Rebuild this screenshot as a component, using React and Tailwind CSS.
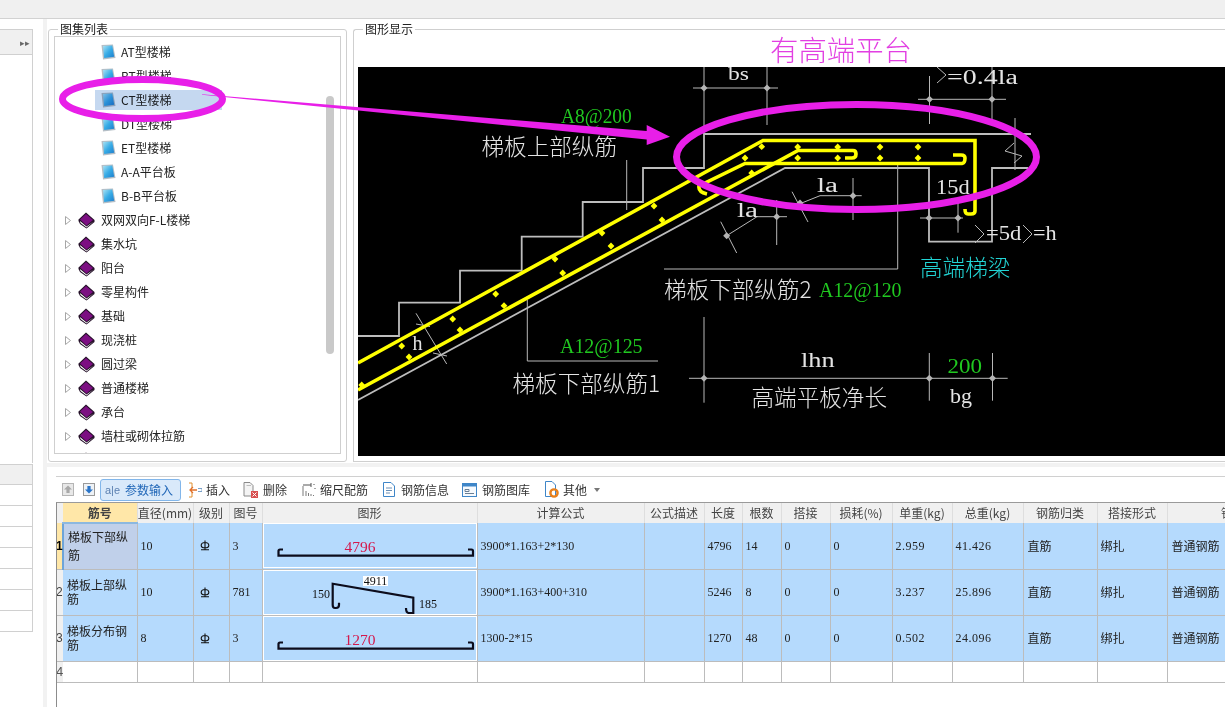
const cjk = "font-['Noto_Sans_CJK_SC',sans-serif]"

const childItems = ["AT型楼梯", "BT型楼梯", "CT型楼梯", "DT型楼梯", "ET型楼梯", "A-A平台板", "B-B平台板"]
const parentItems = ["双网双向F-L楼梯", "集水坑", "阳台", "零星构件", "基础", "现浇桩", "圆过梁", "普通楼梯", "承台", "墙柱或砌体拉筋", ""]

const columns = [
  { name: "筋号", w: 74 },
  { name: "直径(mm)", w: 56 },
  { name: "级别", w: 36 },
  { name: "图号", w: 33 },
  { name: "图形", w: 215 },
  { name: "计算公式", w: 167 },
  { name: "公式描述", w: 60 },
  { name: "长度", w: 38 },
  { name: "根数", w: 39 },
  { name: "搭接", w: 49 },
  { name: "损耗(%)", w: 62 },
  { name: "单重(kg)", w: 60 },
  { name: "总重(kg)", w: 71 },
  { name: "钢筋归类", w: 74 },
  { name: "搭接形式", w: 70 },
  { name: "钢筋特征", w: 156 },
]

const rows = [
  { name: "梯板下部纵筋", d: "10", no: "3", formula: "3900*1.163+2*130", len: "4796", count: "14", unit: "2.959", total: "41.426", shape: "bar", label: "4796" },
  { name: "梯板上部纵筋", d: "10", no: "781", formula: "3900*1.163+400+310", len: "5246", count: "8", unit: "3.237", total: "25.896", shape: "bent" },
  { name: "梯板分布钢筋", d: "8", no: "3", formula: "1300-2*15", len: "1270", count: "48", unit: "0.502", total: "24.096", shape: "bar", label: "1270" },
]

function DocIcon() {
  return (
    <svg width="15" height="16" viewBox="0 0 15 16" className="shrink-0">
      <defs>
        <linearGradient id="docfill" x1="0" y1="0" x2="1" y2="1">
          <stop offset="0" stopColor="#a8e2f4" />
          <stop offset="0.5" stopColor="#38ace6" />
          <stop offset="1" stopColor="#1c7ccc" />
        </linearGradient>
      </defs>
      <path d="M0.5 1 L12 0.5 L14.5 14 L2 15.5 Z" fill="#b4bec6" />
      <path d="M2 2 L11.2 1.6 L13.2 12.8 L3.2 14 Z" fill="url(#docfill)" />
    </svg>
  )
}

function BookIcon() {
  return (
    <svg width="17" height="17" viewBox="0 0 17 17" className="shrink-0">
      <path d="M0.5 7.5 L8 0.5 L16.5 8 L16.5 10 L8.5 16.5 L2 12 L0.5 9 Z" fill="#241028" />
      <path d="M2 7.5 L8 2 L15 8 L8.5 13.5 Z" fill="#7c0f82" />
      <path d="M2 9 L8.5 14.5 L15.5 9.5 L8.5 15.5 L2.5 11 Z" fill="#ffffff" />
    </svg>
  )
}

function Expander() {
  return (
    <svg width="6" height="9" viewBox="0 0 6 9" className="shrink-0">
      <path d="M0.5 0.5 L5.5 4.5 L0.5 8.5 Z" fill="#fff" stroke="#a6a6a6" />
    </svg>
  )
}

function TreePanel() {
  return (
    <div className="relative mt-[10px] ml-[1px] w-[299px] h-[433px] border border-[#cfcfcf] rounded-[3px] bg-white pt-[6px] pl-[5px] pr-[5px] pb-[7px]">
      <div className={`absolute -top-[8px] left-[9px] bg-white px-[2px] text-[12px] leading-[14px] text-[#222] ${cjk}`}>图集列表</div>
      <div className={`relative h-full overflow-hidden border border-[#cfcfcf] text-[12px] text-[#222] ${cjk}`}>
        <div className="pt-[3px]">
          {childItems.map((t) => (
            <div key={t} className="flex h-[24px] items-center pl-[46px]">
              <DocIcon />
              <span className="ml-[5px] leading-[20px]">{t}</span>
            </div>
          ))}
          {parentItems.map((t, i) => (
            <div key={i} className="flex h-[24px] items-center pl-[10px]">
              <Expander />
              <span className="ml-[7px] flex"><BookIcon /></span>
              <span className="ml-[6px] whitespace-nowrap">{t}</span>
            </div>
          ))}
        </div>
        <div className="absolute left-[40px] top-[53px] h-[20px] w-[127px] bg-[#c5d8f0] mix-blend-multiply" />
        <div className="absolute left-[271px] top-[59px] h-[258px] w-[8px] rounded-[4px] bg-[#c9c9c9]" />
      </div>
    </div>
  )
}

function Diamond({ x, y, r = 3.4 }) {
  return <polygon points={`${x},${y - r} ${x + r},${y} ${x},${y + r} ${x - r},${y}`} fill="#ffff00" />
}

function DimDot({ x, y }) {
  return <polygon points={`${x},${y - 3.5} ${x + 3.5},${y} ${x},${y + 3.5} ${x - 3.5},${y}`} fill="#b4b4b4" />
}

// half-width cad lettering, every character gets the same advance
function CadLabel({ x, y, size = 20, adv = 11.8, fill = "#e4e4e4", children }) {
  return (
    <text
      x={x}
      y={y}
      fontSize={size}
      fill={fill}
      textLength={children.length * adv}
      lengthAdjust="spacingAndGlyphs"
      fontFamily="'Liberation Serif','Noto Sans CJK SC',serif"
    >
      {children}
    </text>
  )
}

function CadLabelCn({ x, y, size = 22.6, fill = "#e4e4e4", children }) {
  return (
    <text x={x} y={y} fontSize={size} fill={fill} fontWeight="300" fontFamily="'Noto Sans CJK SC',sans-serif">
      {children}
    </text>
  )
}

const dots = [
  [401.7, 346], [452.7, 319], [495.7, 294], [555, 259], [602, 233], [654, 206], [745, 158], [761.7, 146.7],
  [361.7, 385], [409, 357], [460, 330], [504, 305.7], [562.7, 273], [611, 246], [662, 220], [751.7, 173],
  [797.7, 147], [837.7, 147], [880, 147], [918, 147], [797.7, 158], [837.7, 158], [880, 158], [918, 158],
]

const dimLines = [
  "M704 67V134", "M767 67V125", "M693 88H778",
  "M929.5 76V124", "M992 67V121", "M918 99.3H1006",
  "M1015 118V170", "M1014 143L1005 151L1022 156L1014 163",
  "M626.7 160V210",
  "M801.7 203L820 195.7H861.7", "M853 178V220", "M792 191.7L808 222",
  "M897.7 163V269", "M664 269H897.7",
  "M920 218H963", "M958 203V232.7",
  "M726.7 235.7L757 216.7H787", "M776.7 200V245", "M720.7 221.7L736.7 253",
  "M416 313.3L446.7 364", "M416 324L430 326.5", "M433 353L447 356",
  "M527.3 300V361H658",
  "M689 378.3H1007.7", "M704 317V402.7", "M929.3 353V400.7", "M992.5 353V400.7",
  "M975 225L984 234L975 243", "M1023 225L1032 234L1023 243",
  "M937 67L946 75L937 83",
]

function CadDrawing() {
  return (
    <svg viewBox="358 67 867 389" width="867" height="389" className="block bg-black">
      <path
        d="M358 336H399V302.7H460V270.7H521.7V236.7H582.7V202H643V168H704V134H1031"
        fill="none" stroke="#bdbdbd" strokeWidth="1.8"
      />
      <path
        d="M358 400L785 168H929V241.7H992V168H1028"
        fill="none" stroke="#bdbdbd" strokeWidth="1.8"
      />
      <path d={dimLines.join(" ")} fill="none" stroke="#b8b8b8" strokeWidth="1" />
      <g fill="none" stroke="#ffff00" strokeWidth="3.6">
        <path d="M358 363L763 140.5H975V211Q975 214 971 214H968Q965 214 965 209" />
        <path d="M358 390L798 150.5H853Q856 150.5 856 154Q856 158 852 158H845" />
        <path d="M707 194Q698 192 699 186L745 163.5H962Q965 163 965 158Q965 155 961 155H953" />
      </g>
      {dots.map(([x, y]) => <Diamond key={`${x}-${y}`} x={x} y={y} />)}
      {[[704, 88], [767, 88], [929.5, 99.3], [992, 99.3], [800, 203], [853, 195.7], [929, 218], [958, 218], [726.7, 235.7], [776.7, 216.7], [704, 378.3], [929.3, 378.3], [992.5, 378.3]].map(([x, y]) => (
        <DimDot key={`${x}-${y}`} x={x} y={y} />
      ))}
      <CadLabel x={728} y={80} size={18} adv={10.5}>bs</CadLabel>
      <CadLabel x={947} y={84}>=0.4la</CadLabel>
      <CadLabel x={561} y={122.7} fill="#20c820">A8@200</CadLabel>
      <CadLabelCn x={481.5} y={155}>梯板上部纵筋</CadLabelCn>
      <CadLabel x={817} y={192} adv={10.5}>la</CadLabel>
      <CadLabel x={737} y={217} adv={10.5}>la</CadLabel>
      <CadLabel x={936} y={194} adv={11.2}>15d</CadLabel>
      <CadLabel x={986} y={240}>=5d</CadLabel>
      <CadLabel x={1033} y={240}>=h</CadLabel>
      <CadLabel x={412.5} y={350} adv={10}>h</CadLabel>
      <CadLabelCn x={664} y={298}>梯板下部纵筋2</CadLabelCn>
      <CadLabel x={819} y={297} fill="#20c820">A12@120</CadLabel>
      <CadLabelCn x={920} y={276} fill="#22d4d4">高端梯梁</CadLabelCn>
      <CadLabel x={560} y={352.7} fill="#20c820">A12@125</CadLabel>
      <CadLabelCn x={512.5} y={392}>梯板下部纵筋1</CadLabelCn>
      <CadLabel x={801} y={367} adv={11.2}>lhn</CadLabel>
      <CadLabel x={947.5} y={373} adv={11.5} fill="#20c820">200</CadLabel>
      <CadLabelCn x={751.5} y={406}>高端平板净长</CadLabelCn>
      <CadLabel x={950} y={403} adv={11}>bg</CadLabel>
    </svg>
  )
}

function DrawingPanel() {
  return (
    <div className="relative mt-[10px] ml-[6px] h-[433px] flex-1 border border-r-0 border-[#cfcfcf] rounded-tl-[3px] bg-white pl-[4px] pt-[37px]">
      <div className={`absolute -top-[8px] left-[9px] bg-white px-[2px] text-[12px] leading-[14px] text-[#222] ${cjk}`}>图形显示</div>
      <div className={`absolute left-[416px] top-[1px] text-[28.4px] leading-[36px] font-light text-[#e23fe2] ${cjk}`}>有高端平台</div>
      <CadDrawing />
    </div>
  )
}

function ToolBtn({ icon, label, className = "" }) {
  return (
    <div className={`flex items-center ${className}`}>
      {icon}
      <span className="text-[12px] text-[#333] whitespace-nowrap">{label}</span>
    </div>
  )
}

function Toolbar() {
  return (
    <div className={`flex h-[26px] items-center border-t border-[#d0d0d0] pl-[6px] ${cjk}`}>
      <svg width="12" height="13" viewBox="0 0 12 13" className="shrink-0">
        <rect x="0.5" y="0.5" width="11" height="12" fill="#e8e8e8" stroke="#b5b5b5" />
        <path d="M6 2.5L10 6.5H7.6V10H4.4V6.5H2Z" fill="#a8a8a8" />
      </svg>
      <svg width="12" height="13" viewBox="0 0 12 13" className="ml-[9px] shrink-0">
        <rect x="0.5" y="0.5" width="11" height="12" fill="#eef2f6" stroke="#9a9a9a" />
        <path d="M6 10.5L10 6.5H7.6V3H4.4V6.5H2Z" fill="#2a74c8" />
      </svg>
      <div className="ml-[5px] flex h-[22px] w-[81px] items-center rounded-[3px] border border-[#82b6ea] bg-[#d9e9fa] pl-[4px]">
        <span className="w-[17px] text-[11px] leading-[14px] text-[#5a7fb0] font-['Liberation_Sans',sans-serif]">a|e</span>
        <span className="ml-[3px] text-[12px] text-[#2368b8] whitespace-nowrap">参数输入</span>
      </div>
      <ToolBtn
        className="ml-[7px]"
        label="插入"
        icon={
          <svg width="14" height="16" viewBox="0 0 14 16" className="mr-[4px] shrink-0">
            <path d="M1 1H4V6M4 10V15H1" fill="none" stroke="#e09030" strokeWidth="1" />
            <path d="M9 8H2M5 5L2 8L5 11" fill="none" stroke="#e0702a" strokeWidth="1.3" />
            <path d="M10 6.5H14V9.5H10" fill="none" stroke="#7aa0c8" strokeWidth="1" />
          </svg>
        }
      />
      <ToolBtn
        className="ml-[13px]"
        label="删除"
        icon={
          <svg width="15" height="16" viewBox="0 0 15 16" className="mr-[5px] shrink-0">
            <path d="M1 0.5H7L10 3.5V14H1Z" fill="#f4f4f4" stroke="#8a8a8a" />
            <path d="M3.5 3.5H8" stroke="#bcbcbc" />
            <rect x="8" y="9" width="7" height="7" fill="#d85050" />
            <path d="M9.5 10.5L13.5 14.5M13.5 10.5L9.5 14.5" stroke="#fff" />
          </svg>
        }
      />
      <ToolBtn
        className="ml-[15px]"
        label="缩尺配筋"
        icon={
          <svg width="14" height="14" viewBox="0 0 14 14" className="mr-[4px] shrink-0">
            <path d="M1 3V13M4 8V13M6.5 10V13M9 11V13M11.5 12V13" stroke="#7a7a7a" fill="none" />
            <path d="M1 2H9M9 0V4M12 1V2M13 5V6" stroke="#555" fill="none" />
          </svg>
        }
      />
      <ToolBtn
        className="ml-[14px]"
        label="钢筋信息"
        icon={
          <svg width="14" height="15" viewBox="0 0 14 15" className="mr-[5px] shrink-0">
            <path d="M1.5 0.5H9L12.5 4V14.5H1.5Z" fill="#fff" stroke="#3f86c8" />
            <path d="M4 6H10M4 8.5H10M4 11H8" stroke="#6a8fb5" />
          </svg>
        }
      />
      <ToolBtn
        className="ml-[13px]"
        label="钢筋图库"
        icon={
          <svg width="15" height="14" viewBox="0 0 15 14" className="mr-[5px] shrink-0">
            <rect x="0.5" y="0.5" width="14" height="13" fill="#f6fafe" stroke="#3f86c8" />
            <rect x="0.5" y="0.5" width="14" height="3" fill="#3f86c8" />
            <path d="M3 6.5H7V8.5H3ZM3 10.5H12" fill="none" stroke="#6a7f95" />
          </svg>
        }
      />
      <ToolBtn
        className="ml-[14px]"
        label="其他"
        icon={
          <svg width="15" height="17" viewBox="0 0 15 17" className="mr-[4px] shrink-0">
            <path d="M1.5 0.5H8L11.5 4V15.5H1.5Z" fill="#fff" stroke="#3f86c8" />
            <circle cx="10" cy="12" r="3.6" fill="none" stroke="#e8801c" strokeWidth="2.4" />
          </svg>
        }
      />
      <svg width="6" height="4" viewBox="0 0 6 4" className="ml-[7px] shrink-0">
        <path d="M0 0H6L3 4Z" fill="#777" />
      </svg>
    </div>
  )
}

function BarShape({ label }) {
  return (
    <svg width="213" height="43" viewBox="0 0 213 43" className="block">
      <text x="96" y="28" textAnchor="middle" fontSize="15.5" fill="#d4184c" fontFamily="'Liberation Serif',serif">{label}</text>
      <path d="M19 25.5H16Q14.5 25.5 14.5 27V31.7H209V27Q209 25.5 207.5 25.5H204" fill="none" stroke="#0c0c1c" strokeWidth="2.2" />
    </svg>
  )
}

function BentShape() {
  return (
    <svg width="213" height="43" viewBox="0 0 213 43" className="block">
      <rect x="99" y="5" width="25" height="10" fill="#fff" />
      <text x="111.5" y="14" textAnchor="middle" fontSize="12" fill="#111" fontFamily="'Liberation Serif',serif">4911</text>
      <text x="48" y="27" fontSize="12" fill="#111" fontFamily="'Liberation Serif',serif">150</text>
      <text x="155" y="37" fontSize="12" fill="#111" fontFamily="'Liberation Serif',serif">185</text>
      <path d="M75 31.7V34Q75 37 72 37H71Q68.7 37 68.7 34V12.7L149.3 26.7V42H145Q142 42 142 37" fill="none" stroke="#0c0c1c" strokeWidth="2.2" />
    </svg>
  )
}

// rebar grade symbol
function GradeMark() {
  return (
    <svg width="10" height="11" viewBox="0 0 10 11" className="ml-[3px] block">
      <path d="M5 0.5V9.5M1 9.8H9M1.2 5.5Q1.2 2.5 5 2.5Q8.8 2.5 8.8 5.5Q8.8 7.8 5 7.8Q1.2 7.8 1.2 5.5Z" fill="none" stroke="#111" strokeWidth="1.1" />
    </svg>
  )
}

function ParamTable() {
  const cellBorder = "border-r border-b border-[#bcbcbc]"
  const num = "font-['Liberation_Serif',serif] text-[12px]"
  return (
    <div className="relative ml-[9px] flex-1 overflow-hidden border-t border-l border-t-[#9a9a9a] border-l-[#8c8c8c]">
      <table className={`w-[1160px] table-fixed border-collapse text-[12px] text-[#222] ${cjk}`}>
        <colgroup>
          <col className="w-[6px]" />
          {columns.map((c) => <col key={c.name} style={{ width: c.w }} />)}
        </colgroup>
        <thead>
          <tr className="h-[20px]">
            <th className="bg-[#f0f0f0]" />
            {columns.map((c, i) => (
              <th
                key={c.name}
                className={`overflow-hidden whitespace-nowrap border-r border-[#dedede] p-0 text-center font-normal text-[#444] ${i === 0 ? "bg-[#ffe7a8] border-b-2 border-b-[#8cb8e0] font-semibold text-[#222]" : "bg-[#f0f0f0]"}`}
              >
                {c.name}
              </th>
            ))}
          </tr>
        </thead>
        <tbody>
          {rows.map((r, i) => (
            <tr key={r.name} className="h-[46px] bg-[#b5dafd]">
              <td className={`overflow-visible border-b border-[#bcbcbc] p-0 text-[12px] ${i === 0 ? "bg-[#ffe7a8] font-bold text-black" : "bg-[#f0f0f0] text-[#444]"}`}>
                <span className="-ml-[1px] block font-['Liberation_Sans',sans-serif]">{i + 1}</span>
              </td>
              <td className={`${cellBorder} px-[4px] py-0 leading-[14px] ${i === 0 ? "bg-[#c0d0ea] border-l-2 border-l-[#6ea4d8] leading-[18px]" : ""}`}>{r.name}</td>
              <td className={`${cellBorder} px-[3px] py-0 ${num}`}>{r.d}</td>
              <td className={`${cellBorder} px-[3px] py-0`}><GradeMark /></td>
              <td className={`${cellBorder} px-[3px] py-0 ${num}`}>{r.no}</td>
              <td className={`${cellBorder} p-0`}>
                <div className="border border-white">
                  {r.shape === "bar" ? <BarShape label={r.label} /> : <BentShape />}
                </div>
              </td>
              <td className={`${cellBorder} px-[3px] py-0 ${num}`}>{r.formula}</td>
              <td className={`${cellBorder} p-0`} />
              <td className={`${cellBorder} px-[3px] py-0 ${num}`}>{r.len}</td>
              <td className={`${cellBorder} px-[3px] py-0 ${num}`}>{r.count}</td>
              <td className={`${cellBorder} px-[3px] py-0 ${num}`}>0</td>
              <td className={`${cellBorder} px-[3px] py-0 ${num}`}>0</td>
              <td className={`${cellBorder} px-[3px] py-0 ${num} tracking-[0.5px]`}>{r.unit}</td>
              <td className={`${cellBorder} px-[3px] py-0 ${num} tracking-[0.5px]`}>{r.total}</td>
              <td className={`${cellBorder} px-[4px] py-0`}>直筋</td>
              <td className={`${cellBorder} px-[3px] py-0`}>绑扎</td>
              <td className={`${cellBorder} whitespace-nowrap px-[4px] py-0`}>普通钢筋</td>
            </tr>
          ))}
          <tr className="h-[21px]">
            <td className="border-b border-[#bcbcbc] bg-[#f0f0f0] p-0 text-[13px] text-[#555]">
              <span className="-ml-[1px] block font-['Liberation_Sans',sans-serif]">4</span>
            </td>
            {columns.map((c) => <td key={c.name} className={`${cellBorder} p-0`} />)}
          </tr>
        </tbody>
      </table>
    </div>
  )
}

function LeftSidebar() {
  return (
    <div className="flex w-[33px] shrink-0 flex-col">
      <div className="mt-[10px] h-[434px] border-t border-r border-[#d0d0d0]">
        <div className="flex h-[25px] items-center justify-end border-b border-[#d0d0d0] bg-[#f0f0f0] pr-[2px] text-[9px] leading-none text-[#666]">
          ▸▸
        </div>
      </div>
      <div className="mt-[1px] border-r border-b border-t border-[#d0d0d0]">
        <div className="h-[19px] bg-[#f0f0f0]" />
        {[0, 1, 2, 3, 4, 5, 6].map((i) => (
          <div key={i} className="h-[21px] border-t border-[#d0d0d0]" />
        ))}
      </div>
    </div>
  )
}

// magenta annotations drawn over the screenshot
function Annotations() {
  return (
    <svg width="1225" height="707" viewBox="0 0 1225 707" className="pointer-events-none absolute left-0 top-0">
      <ellipse cx="142.5" cy="99" rx="80" ry="19.5" fill="none" stroke="#e81fe8" strokeWidth="7" />
      <ellipse cx="856.5" cy="157" rx="180" ry="52.5" fill="none" stroke="#e81fe8" strokeWidth="7" />
      <polygon points="202,94.3 646.7,131 646.7,125 670,136.7 646.7,145 646.7,139.5 202,94.8" fill="#e81fe8" />
    </svg>
  )
}

export default function App() {
  return (
    <div className="relative flex h-[707px] w-[1225px] flex-col overflow-hidden bg-white">
      <div className="h-[19px] shrink-0 border-b border-[#d2d2d2] bg-[#f0f0f0]" />
      <div className="flex flex-1 overflow-hidden">
        <LeftSidebar />
        <div className="ml-[10px] w-[4px] shrink-0 bg-[#f2f2f2]" />
        <div className="flex flex-1 flex-col overflow-hidden">
          <div className="flex h-[444px] shrink-0 bg-white">
            <TreePanel />
            <DrawingPanel />
          </div>
          <div className="h-[4px] shrink-0 bg-[#f2f2f2]" />
          <div className="flex flex-1 flex-col bg-white pt-[9px]">
            <div className="ml-[9px]"><Toolbar /></div>
            <ParamTable />
          </div>
        </div>
      </div>
      <Annotations />
    </div>
  )
}
